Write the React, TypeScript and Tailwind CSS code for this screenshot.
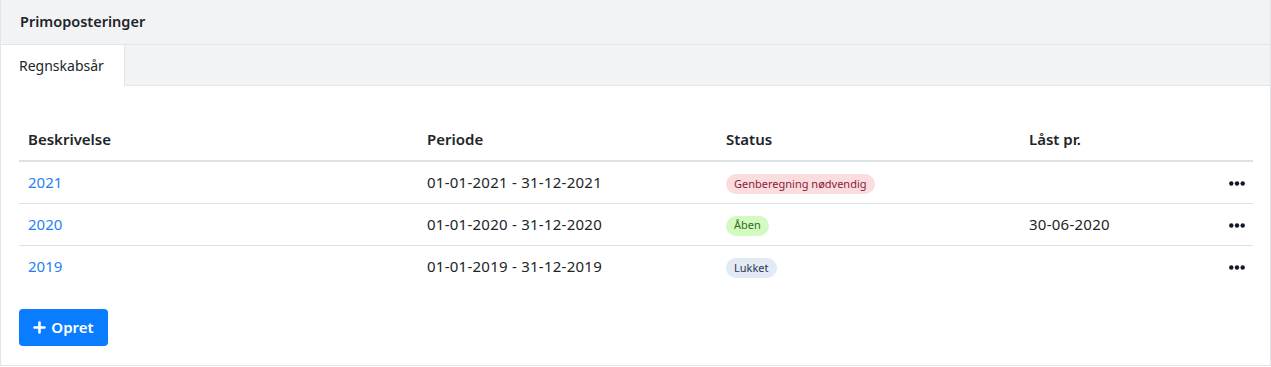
import React from 'react';

type Row = {
  year: string;
  period: string;
  status: 'danger' | 'success' | 'closed';
  statusText: string;
  locked: string;
};

const rows: Row[] = [
  { year: '2021', period: '01-01-2021 - 31-12-2021', status: 'danger', statusText: 'Genberegning nødvendig', locked: '' },
  { year: '2020', period: '01-01-2020 - 31-12-2020', status: 'success', statusText: 'Åben', locked: '30-06-2020' },
  { year: '2019', period: '01-01-2019 - 31-12-2019', status: 'closed', statusText: 'Lukket', locked: '' },
];

const badgeClass: Record<Row['status'], string> = {
  danger: 'bg-[#fbdde0] text-[#8a1c36]',
  success: 'bg-[#d3fac0] text-[#356a1a]',
  closed: 'bg-[#e2eaf3] text-[#2c3654]',
};

const Dots = () => (
  <svg width="16" height="5" viewBox="0 0 16 5" className="inline-block">
    <circle cx="2.3" cy="2.5" r="2.2" fill="#111827" />
    <circle cx="8" cy="2.5" r="2.2" fill="#111827" />
    <circle cx="13.7" cy="2.5" r="2.2" fill="#111827" />
  </svg>
);

const App: React.FC = () => {
  return (
    <div
      className="w-[1271px] h-[367px] bg-white text-[#212529]"
      style={{ fontFamily: '"Segoe UI", "Noto Sans", "Open Sans", sans-serif' }}
    >
      <div className="border border-[#e3e5e8] border-t-0 bg-white">
        {/* Header */}
        <div className="h-[45px] bg-[#f2f3f5] border-b border-[#e3e5e8] flex items-center px-[19px]">
          <span className="text-[14.5px] font-semibold text-[#212529]">Primoposteringer</span>
        </div>

        {/* Tabs */}
        <div className="h-[41px] bg-[#f2f3f5] border-b border-[#e3e5e8] flex">
          <div className="bg-white h-[41px] -mb-px w-[124px] border-r border-[#e3e5e8] flex items-center px-[18px] text-[14px]">
            Regnskabsår
          </div>
        </div>

        {/* Body */}
        <div className="px-[18px] pt-[33px] pb-[19px]">
          <table className="w-[1234px] border-collapse text-[15px]">
            <thead>
              <tr className="h-[42px] border-b-2 border-[#dee2e6] text-left">
                <th className="w-[399px] px-[9px] font-semibold">Beskrivelse</th>
                <th className="w-[299px] px-[9px] font-semibold">Periode</th>
                <th className="w-[303px] px-[9px] font-semibold">Status</th>
                <th className="px-[9px] font-semibold">Låst pr.</th>
                <th className="w-[40px]"></th>
              </tr>
            </thead>
            <tbody>
              {rows.map((r, i) => (
                <tr key={r.year} className={`h-[42px] ${i < rows.length - 1 ? 'border-b border-[#dee2e6]' : ''}`}>
                  <td className="px-[9px] text-[#1f80f5]">{r.year}</td>
                  <td className="px-[9px] tracking-[0.25px]">{r.period}</td>
                  <td className="px-[9px]">
                    <span className={`inline-flex items-center h-[20px] px-[8px] rounded-full text-[11px] ${badgeClass[r.status]}`}>
                      {r.statusText}
                    </span>
                  </td>
                  <td className="px-[9px] tracking-[0.25px]">{r.locked}</td>
                  <td className="pr-[8px] text-right">
                    <Dots />
                  </td>
                </tr>
              ))}
            </tbody>
          </table>

          <button className="mt-[22px] h-[37px] w-[89px] rounded-[4px] bg-[#0a7cff] text-white text-[15px] font-semibold flex items-center justify-center gap-[5px]">
            <svg width="13" height="13" viewBox="0 0 13 13">
              <path d="M6.5 1.5v10M1.5 6.5h10" stroke="white" strokeWidth="2.6" strokeLinecap="round" />
            </svg>
            Opret
          </button>
        </div>
      </div>
    </div>
  );
};

export default App;
